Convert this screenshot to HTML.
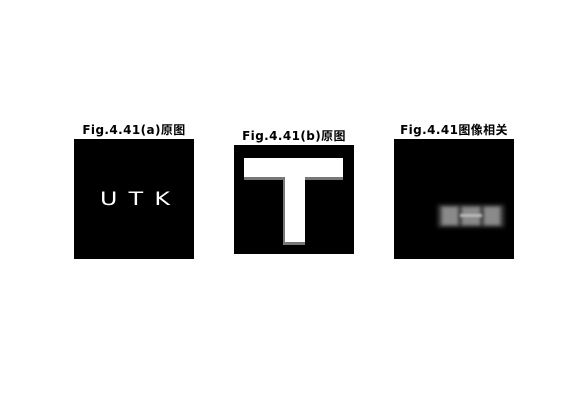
<!DOCTYPE html>
<html><head><meta charset="utf-8"><style>
body{margin:0;width:570px;height:413px;background:#fff;position:relative;overflow:hidden;font-family:"DejaVu Sans","Noto Sans CJK SC",sans-serif}
.t{position:absolute;font-weight:bold;font-size:12px;color:#000;text-align:center;width:160px;white-space:nowrap;letter-spacing:0.4px}
.im{position:absolute;background:#000}
</style></head><body>
<div class="t" style="left:54px;top:121px">Fig.4.41(a)原图</div>
<div class="im" style="left:74px;top:139px;width:120px;height:120px">
 <div style="position:absolute;left:26px;top:50px;width:80px;color:#fff;font-family:'DejaVu Sans',sans-serif;font-size:19px;letter-spacing:9px;line-height:20px;transform:scaleX(1.25);transform-origin:left">UTK</div>
</div>
<div class="t" style="left:214px;top:127px">Fig.4.41(b)原图</div>
<div class="im" style="left:234px;top:145px;width:120px;height:109px">
 <div style="position:absolute;left:10px;top:16px;width:99px;height:19px;background:#777"></div>
 <div style="position:absolute;left:49px;top:30px;width:22px;height:70px;background:#777"></div>
 <div style="position:absolute;left:10px;top:13px;width:99px;height:19px;background:#fff"></div>
 <div style="position:absolute;left:51px;top:28px;width:20px;height:69px;background:#fff"></div>
</div>
<div class="t" style="left:374px;top:121px">Fig.4.41图像相关</div>
<div class="im" style="left:394px;top:139px;width:120px;height:120px">
 <div style="position:absolute;left:44px;top:66px;width:66px;height:22px;background:#444;filter:blur(2px)"></div>
 <div style="position:absolute;left:48px;top:68px;width:16px;height:18px;background:#8a8a8a;filter:blur(1.5px)"></div>
 <div style="position:absolute;left:68px;top:68px;width:18px;height:18px;background:#8a8a8a;filter:blur(1.5px)"></div>
 <div style="position:absolute;left:90px;top:68px;width:16px;height:18px;background:#8a8a8a;filter:blur(1.5px)"></div>
 <div style="position:absolute;left:66px;top:75px;width:22px;height:3px;background:#bbb;filter:blur(1px)"></div>
</div>
</body></html>
